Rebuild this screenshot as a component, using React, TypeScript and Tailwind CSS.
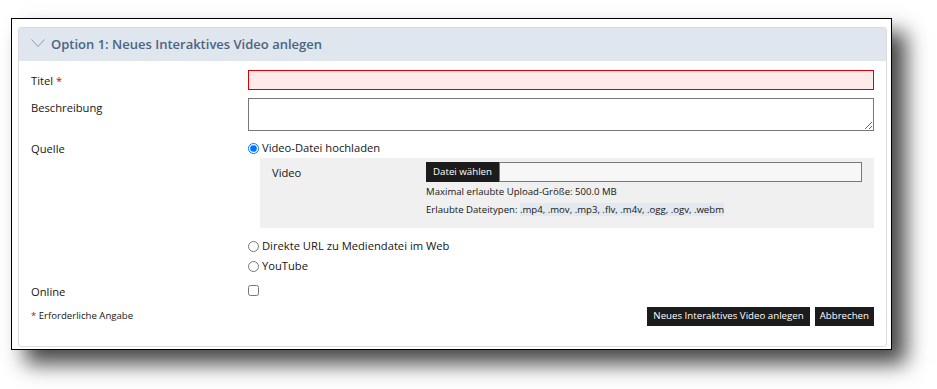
import React from "react";

function Radio({ checked, label }: { checked?: boolean; label: string }) {
  return (
    <label className="flex items-center h-[16px] gap-[3px] text-[11.2px] text-[#161616]">
      <input
        type="radio"
        name="src"
        defaultChecked={checked}
        className="m-0 w-[11px] h-[11px]"
      />
      <span>{label}</span>
    </label>
  );
}

export default function App() {
  return (
    <div
      className="bg-white w-[937px] h-[389px] pt-[18px] pl-[11px]"
      style={{ fontFamily: '"Open Sans", "Noto Sans", sans-serif' }}
    >
      <div className="w-[881px] h-[332px] border border-black bg-white shadow-[14px_14px_20px_rgba(0,0,0,0.72)] pt-[8px] pl-[6px] pr-[4px]">
        <div className="border border-[#dcdcdc] rounded-[3px] h-[320px] bg-white">
          <div className="h-[33px] bg-[#dfe6ee] flex items-center pl-[12px] gap-[6px]">
            <svg width="14" height="9" viewBox="0 0 14 9" className="mt-[-2px]">
              <path d="M0.5 0.5 L7 7.5 L13.5 0.5" fill="none" stroke="#8d9aab" strokeWidth="1" />
            </svg>
            <span className="text-[13px] font-semibold text-[#4c6383] leading-none">
              Option 1: Neues Interaktives Video anlegen
            </span>
          </div>
          <div className="px-[12px] text-[#161616]">
            {/* Titel */}
            <div className="flex mt-[9px]">
              <div className="w-[217px] text-[11.2px] leading-[16px] pt-[3px]">
                Titel <span className="text-[#d00]">*</span>
              </div>
              <div className="flex-1 h-[20px] border border-[#e00000] bg-[#ffeaea]" />
            </div>
            {/* Beschreibung */}
            <div className="flex mt-[8px]">
              <div className="w-[217px] text-[11.2px] leading-[16px] pt-[2px]">Beschreibung</div>
              <textarea className="flex-1 h-[33px] border border-[#777] bg-white block resize-y" />
            </div>
            {/* Quelle */}
            <div className="flex mt-[9px]">
              <div className="w-[217px] text-[11.2px] leading-[16px] pt-[1px]">Quelle</div>
              <div className="flex-1">
                <Radio checked label="Video-Datei hochladen" />
                <div className="ml-[12px] mt-[2px] h-[70px] bg-[#f0f0f0] flex pt-[4px] pl-[12px] pr-[12px]">
                  <div className="w-[154px] text-[11.2px] leading-[16px] pt-[3px]">Video</div>
                  <div className="flex-1">
                    <div className="flex h-[20px]">
                      <div className="bg-[#1c1c1c] text-white text-[9.7px] h-[20px] w-[73px] flex items-center justify-center">
                        Datei wählen
                      </div>
                      <div className="flex-1 border border-[#777] bg-[#f7f7f7]" />
                    </div>
                    <div className="text-[9.6px] leading-[18px] mt-[1px]">
                      Maximal erlaubte Upload-Größe: 500.0 MB
                    </div>
                    <div className="text-[9.6px] leading-[18px]">
                      Erlaubte Dateitypen:{" "}
                      <span className="bg-[#e2e9f1]">.mp4, .mov, .mp3, .flv, .m4v, .ogg, .ogv, .webm</span>
                    </div>
                  </div>
                </div>
                <div className="mt-[10px] flex flex-col gap-[4px]">
                  <Radio label="Direkte URL zu Mediendatei im Web" />
                  <Radio label="YouTube" />
                </div>
              </div>
            </div>
            {/* Online */}
            <div className="flex mt-[9px]">
              <div className="w-[217px] text-[11.2px] leading-[16px] pt-[1px]">Online</div>
              <div className="flex-1 flex items-center h-[16px]">
                <input type="checkbox" className="m-0 w-[11px] h-[11px] mt-[-2px]" />
              </div>
            </div>
            {/* Footer */}
            <div className="flex items-center justify-between mt-[7px] h-[19px]">
              <div className="text-[9.6px]">
                <span className="text-[#d00]">*</span> Erforderliche Angabe
              </div>
              <div className="flex gap-[5px]">
                <button className="bg-[#1c1c1c] text-white text-[9.7px] h-[19px] px-[6px]">
                  Neues Interaktives Video anlegen
                </button>
                <button className="bg-[#1c1c1c] text-white text-[9.7px] h-[19px] px-[5px]">
                  Abbrechen
                </button>
              </div>
            </div>
          </div>
        </div>
      </div>
    </div>
  );
}
